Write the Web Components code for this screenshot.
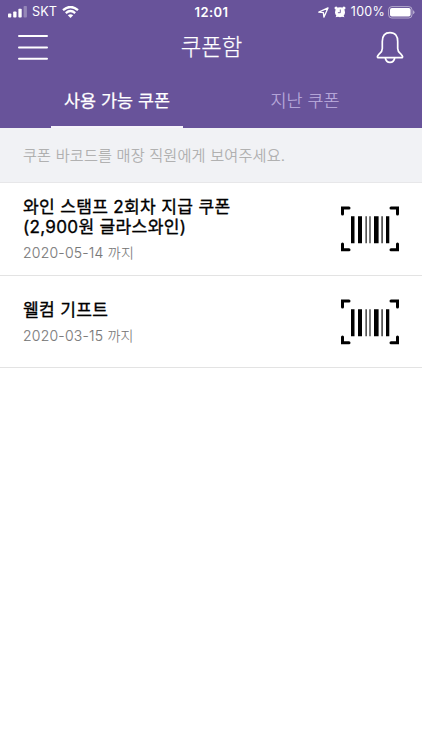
<!DOCTYPE html>
<html lang="ko">
<head>
<meta charset="utf-8">
<title>쿠폰함</title>
<style>
html,body{margin:0;height:100%;background:#fff}
body{font-family:Inter,"Noto Sans CJK KR",sans-serif;color:#000}
</style>
</head>
<body>
<coupon-app></coupon-app>
<script>
const define=(name,html)=>customElements.define(name,class extends HTMLElement{
  constructor(){super();this.attachShadow({mode:'open'}).innerHTML=html;}
});

define('status-bar',`<style>
:host{display:grid;grid-template-columns:1fr auto 1fr;height:24px;align-items:center;color:#fff;font:13px/24px Inter,sans-serif;box-sizing:border-box;padding:0 7px 0 8px}
.l,.r{display:flex;align-items:center;height:24px}.r{justify-content:flex-end}
svg{display:block;flex:none}
.carrier{margin:0 5px 0 4px;font-size:12.7px}
.time{font-weight:600;font-size:13px;letter-spacing:.45px}
.pct{margin:0 3px 0 5px;font-size:12.5px;letter-spacing:.25px}
</style>
<div class="l">
<svg width="20" height="12" viewBox="0 0 20 12" fill="#fff"><rect y="7.5" width="3.3" height="4" rx=".8"/><rect x="5.2" y="5.5" width="3.3" height="6" rx=".8"/><rect x="10.4" y="2.8" width="3.3" height="8.7" rx=".8"/><rect x="15.6" y="0" width="3.3" height="11.5" rx=".8" opacity=".3"/></svg>
<span class="carrier">SKT</span>
<svg width="17" height="13" viewBox="0 0 17 13" fill="none" stroke="#fff" stroke-width="2.3"><path d="M1 4.2Q8.5-2.3 16 4.2M3.8 7.1Q8.5 3 13.2 7.1"/><path d="M5.8 9.2Q8.5 7.2 11.2 9.2L8.5 12Z" fill="#fff" stroke="none"/></svg>
</div>
<span class="time">12:01</span>
<div class="r">
<svg width="11" height="11" viewBox="0 0 11 11" fill="none" stroke="#fff" stroke-width="1.3" stroke-linejoin="round"><path d="M.8 5.2 10 .9 5.9 10.2 5.4 5.6Z"/></svg>
<svg style="margin-left:5px" width="12" height="12" viewBox="0 0 12 12"><g fill="#fff"><circle cx="6" cy="6.2" r="5"/><circle cx="2.1" cy="2.1" r="1.6"/><circle cx="9.9" cy="2.1" r="1.6"/><path d="M1.5 11.3 2.8 9l2 1.5ZM10.5 11.3 9.2 9l-2 1.5Z"/></g><path d="M6.3 3.5v3.2H3.9" fill="none" stroke="#68539a" stroke-width=".9"/></svg>
<span class="pct">100%</span>
<svg width="27" height="13" viewBox="0 0 27 13"><rect x=".6" y=".6" width="23.4" height="11.4" rx="3.2" fill="none" stroke="#fff" stroke-opacity=".5"/><rect x="2" y="2" width="20.6" height="8.6" rx="1.8" fill="#fff"/><path d="M25 4.3q1.5.6 1.5 2t-1.5 2Z" fill="#fff" opacity=".5"/></svg>
</div>`);

define('nav-bar',`<style>
:host{display:grid;grid-template-columns:1fr auto 1fr;height:48px;box-sizing:border-box;align-items:center;padding:0 17px 3px 18px;color:#fff}
h1{margin:0;font-size:22.3px;line-height:44px;padding-top:1px;font-weight:300;-webkit-text-stroke:.25px currentColor}
svg{display:block}.bell{justify-self:end}
</style>
<svg width="30" height="28" viewBox="0 0 30 28" stroke="#fff" stroke-width="2" stroke-linecap="round"><path d="M1 3h28M1 14.5h28M1 25.7h28"/></svg>
<h1><slot></slot></h1>
<svg class="bell" width="30" height="34" viewBox="0 0 30 34" fill="none" stroke="#fff" stroke-width="1.7" stroke-linejoin="round"><path d="M15 2.6C9.7 2.6 7.3 6.2 7.3 11.5v7c0 3.2-1.4 4-3.4 5.8C2 26 2 27.7 3.4 27.7h23.2c1.4 0 1.4-1.7-.5-3.4-2-1.8-3.4-2.6-3.4-5.8v-7c0-5.3-2.4-8.9-7.7-8.9Z"/><path d="M10.3 28c.5 3 2.1 4.4 4.7 4.4s4.2-1.4 4.7-4.4"/></svg>`);

define('tab-item',`<style>
:host{display:flex;justify-content:center;height:56px;box-sizing:border-box;color:#bdaede;font-size:17.4px;line-height:58px;font-weight:300;border-bottom:2px solid transparent;white-space:nowrap;-webkit-text-stroke:.2px currentColor}
:host([selected]){color:#fff;font-weight:400;-webkit-text-stroke:.25px currentColor;border-bottom-color:#f6f3fb}
</style><slot></slot>`);

define('tab-bar',`<style>:host{display:grid;grid-template-columns:132px 132px;column-gap:56px;padding-left:51px;height:56px}</style><slot></slot>`);

define('info-notice',`<style>:host{display:block;box-sizing:border-box;height:55px;background:#f1f2f5;border-bottom:1px solid #e7e7e9;color:#aaa;font-size:15.2px;letter-spacing:.15px;line-height:55px;font-weight:300;padding-left:23px;white-space:nowrap;-webkit-text-stroke:.2px currentColor}</style><slot></slot>`);

define('barcode-icon',`<style>:host{display:block;width:60px;height:46px}svg{display:block}</style>
<svg width="60" height="46" viewBox="0 0 60 46"><path d="M9 2H2.5V8M51 2h6.5V8M2.5 38v5.7H9M57.5 38v5.7H51" fill="none" stroke="#000" stroke-width="3" stroke-linecap="round"/><path d="M11 10.3h3.5v27H11zM18 10.3h4v27h-4zM34 10.3h4.6v27H34zM46 10.3h3.3v27H46z"/><path fill="#444" d="M25.4 10.3h1.5v27h-1.5zM29.3 10.3h1.4v27h-1.4zM41.3 10.3h1.6v27h-1.6z"/></svg>`);

define('coupon-row',`<style>
:host{display:flex;align-items:center;justify-content:space-between;box-sizing:border-box;border-bottom:1px solid #e3e3e3;padding:0 22px 0 23px}
.text{padding-top:2px}
.name{font-size:17.1px;letter-spacing:.3px;line-height:20px;font-weight:400;white-space:nowrap;-webkit-text-stroke:.35px currentColor}
.date{font-size:14px;letter-spacing:.22px;line-height:20px;font-weight:300;color:#777;margin-top:6px;white-space:nowrap;-webkit-text-stroke:.1px currentColor}
</style><div class="text"><div class="name"><slot></slot></div><div class="date"><slot name="date"></slot></div></div><barcode-icon></barcode-icon>`);

define('coupon-app',`<style>
:host{display:block;min-height:100%}
header{background:#68539a;height:128px}
coupon-row{height:93px}
coupon-row+coupon-row{height:92px}
</style>
<header><status-bar></status-bar><nav-bar>쿠폰함</nav-bar>
<tab-bar><tab-item selected>사용 가능 쿠폰</tab-item><tab-item>지난 쿠폰</tab-item></tab-bar></header>
<info-notice>쿠폰 바코드를 매장 직원에게 보여주세요.</info-notice>
<main>
<coupon-row>와인 스탬프 2회차 지급 쿠폰<br>(2,900원 글라스와인)<span slot="date">2020-05-14 까지</span></coupon-row>
<coupon-row>웰컴 기프트<span slot="date">2020-03-15 까지</span></coupon-row>
</main>`);
</script>
</body>
</html>
